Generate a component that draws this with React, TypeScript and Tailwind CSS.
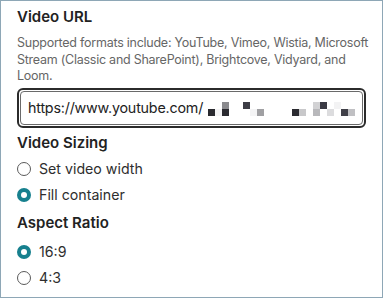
import React from 'react';

type Cell = { c: number; r: number; fill: string };

// pixelated (redacted) part of the url
const cells: Cell[] = [
  { c: 2, r: 0, fill: '#8a8a8e' },
  { c: 5, r: 0, fill: '#3d3d45' },
  { c: 15, r: 0, fill: '#d2d2d4' },
  { c: 16, r: 0, fill: '#3a3a44' },
  { c: 18, r: 0, fill: '#f3f3f4' },
  { c: 0, r: 1, fill: '#2a2a2f' },
  { c: 1, r: 1, fill: '#f4f4f5' },
  { c: 2, r: 1, fill: '#2a2a30' },
  { c: 6, r: 1, fill: '#f4f4f5' },
  { c: 7, r: 1, fill: '#a0a0a3' },
  { c: 12, r: 1, fill: '#2a2a30' },
  { c: 13, r: 1, fill: '#c8c8ca' },
  { c: 15, r: 1, fill: '#b8b8bb' },
  { c: 17, r: 1, fill: '#dcdcde' },
  { c: 19, r: 1, fill: '#404048' },
  { c: 20, r: 1, fill: '#c0c0c3' },
];

const Redacted: React.FC = () => (
  <svg width="147" height="14" viewBox="0 0 147 14" className="shrink-0 ml-[5px] mt-[2px]">
    {cells.map((cell, i) => (
      <rect key={i} x={cell.c * 7} y={cell.r * 7} width="7" height="7" fill={cell.fill} />
    ))}
  </svg>
);

const Radio: React.FC<{ label: string; checked?: boolean }> = ({ label, checked }) => (
  <label className="flex items-center gap-[8px] h-[26px]">
    {checked ? (
      <span className="w-[14px] h-[14px] rounded-full bg-[#17808e] flex items-center justify-center shrink-0">
        <span className="w-[6px] h-[6px] rounded-full bg-white" />
      </span>
    ) : (
      <span className="w-[14px] h-[14px] rounded-full border border-[#5a5a5a] bg-white shrink-0" />
    )}
    <span className="text-[14.2px] text-[#2e2e2e]">{label}</span>
  </label>
);

const App: React.FC = () => {
  return (
    <div
      className="w-[383px] h-[298px] border border-[#8ea7b6] bg-white pl-4 pr-3 pt-[5px]"
      style={{ fontFamily: 'Inter, "Noto Sans", sans-serif' }}
    >
      <h3 className="text-[15px] leading-[22px] font-semibold text-[#222]">Video URL</h3>
      <p className="mt-[7px] mr-[-6px] text-[12.5px] leading-[16.5px] tracking-[-0.25px] text-[#666]">
        Supported formats include: YouTube, Vimeo, Wistia, Microsoft Stream (Classic and SharePoint), Brightcove, Vidyard, and Loom.
      </p>

      {/* focused input */}
      <div className="mt-[3px] mr-1 h-[40px] rounded-[6px] border-2 border-[#2b2b2b] p-[1px]">
        <div className="h-full rounded-[4px] border border-[#6a6a6a] flex items-center pl-[7px] overflow-hidden">
          <span className="text-[14.3px] tracking-[-0.2px] text-[#222] whitespace-nowrap">https://www.youtube.com/</span>
          <Redacted />
        </div>
      </div>

      <h3 className="mt-[4px] text-[15px] leading-[22px] font-semibold text-[#222]">Video Sizing</h3>
      <div className="mt-[2px]">
        <Radio label="Set video width" />
        <Radio label="Fill container" checked />
      </div>

      <h3 className="mt-[4px] text-[15px] leading-[22px] font-semibold text-[#222]">Aspect Ratio</h3>
      <div className="mt-[5px]">
        <Radio label="16:9" checked />
        <Radio label="4:3" />
      </div>
    </div>
  );
};

export default App;
